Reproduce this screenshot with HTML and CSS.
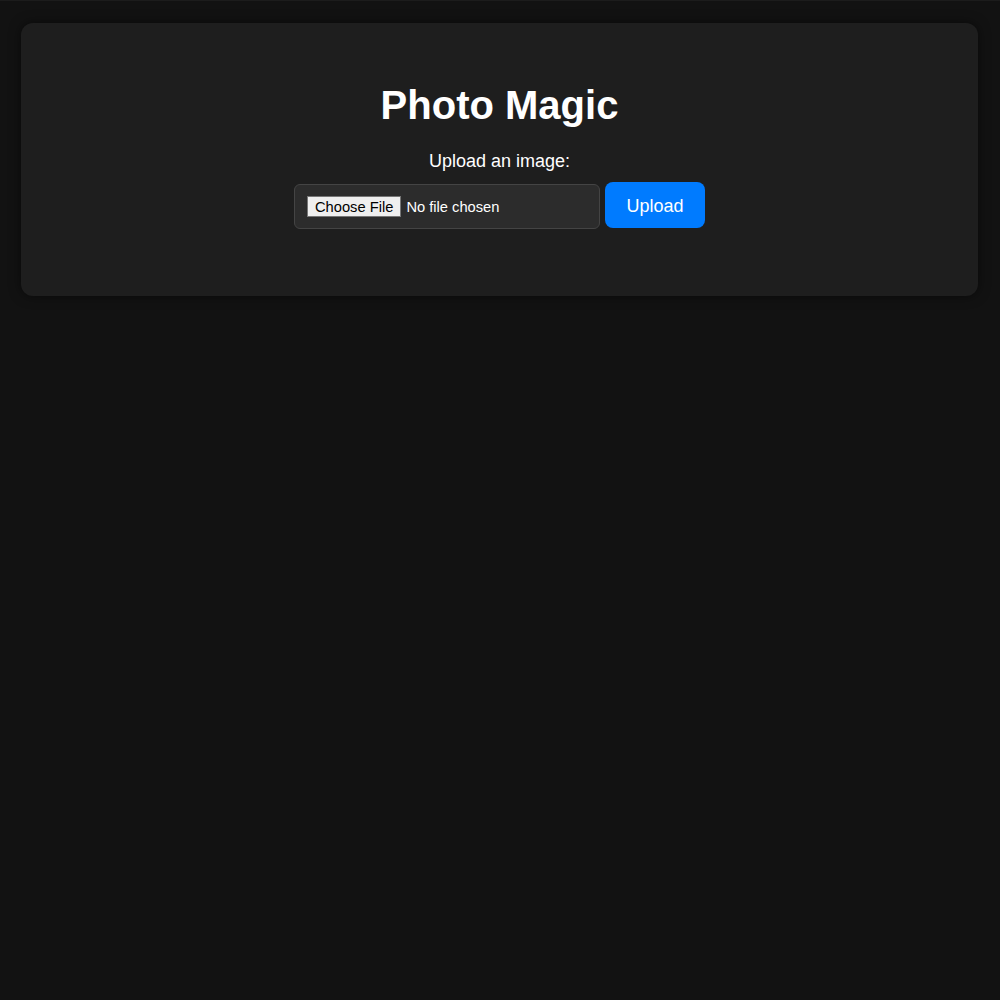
FILE: index.html
```html
<!DOCTYPE html>
<html>
<head>
<meta charset="utf-8">
<link rel="stylesheet" href="styles.css">
</head>
<body>
<main class="card">
  <h1 class="title">Photo Magic</h1>
  <form class="upload-form">
    <label class="label" for="file">Upload an image:</label>
    <div class="row">
      <input class="file-input" id="file" type="file">
      <button class="btn" type="button">Upload</button>
    </div>
  </form>
</main>
</body>
</html>
```
FILE: styles.css
```css
html, body {
  margin: 0;
  background: #121212;
}
body {
  padding: 22px 22px 22px 21px;
  font-family: "Liberation Sans", Arial, sans-serif;
  color: #ffffff;
  min-height: 1000px;
  box-sizing: border-box;
  border-top: 1px solid #1c1c1c;
}
.card {
  background: #1e1e1e;
  border-radius: 12px;
  box-shadow: 0 0 12px rgba(0, 0, 0, 0.5);
  padding: 59px 20px 67px;
  text-align: center;
}
.title {
  margin: 0;
  font-size: 40px;
  line-height: 46px;
  font-weight: bold;
}
.upload-form {
  display: flex;
  flex-direction: column;
  align-items: center;
  margin-top: 23px;
}
.label {
  font-size: 18px;
  line-height: 21px;
}
.row {
  display: flex;
  align-items: flex-start;
  gap: 5px;
  margin-top: 10px;
}
.file-input {
  box-sizing: border-box;
  width: 306px;
  height: 45px;
  margin-top: 2px;
  padding: 11px 11px;
  background: #2c2c2c;
  border: 1px solid #444;
  border-radius: 6px;
  color: #ffffff;
  font-family: "Liberation Sans", Arial, sans-serif;
  font-size: 14.7px;
}
.file-input::file-selector-button {
  background: #efefef;
  color: #000000;
  border: 1px solid #767676;
  border-radius: 0;
  padding: 2px 7px 1px;
  margin: 0 5px 0 1px;
  font-family: inherit;
  font-size: inherit;
}
.btn {
  box-sizing: border-box;
  width: 100px;
  height: 46px;
  background: #007bff;
  color: #ffffff;
  border: none;
  border-radius: 8px;
  font-family: "Liberation Sans", Arial, sans-serif;
  font-size: 18px;
  padding: 2px 0 0;
  cursor: pointer;
}
```
